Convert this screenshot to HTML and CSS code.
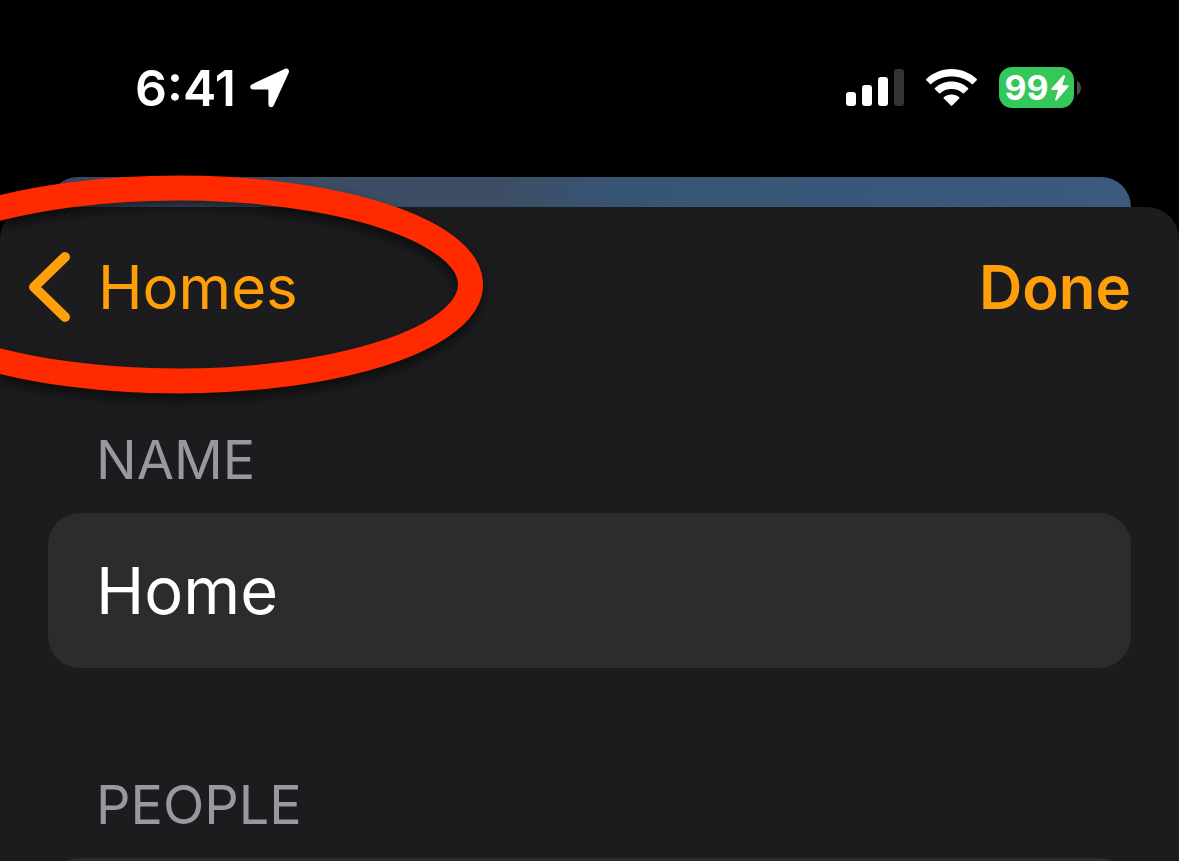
FILE: index.html
```html
<!DOCTYPE html>
<html lang="en">
<head>
<meta charset="utf-8">
<meta name="viewport" content="width=device-width, initial-scale=1">
<title>Home</title>
<link rel="stylesheet" href="styles.css">
</head>
<body>
<div class="screen">
  <header class="status">
    <div class="status-left">
      <span class="time">6:41</span>
      <svg class="location" width="40" height="40" viewBox="0 0 40 40" aria-hidden="true"><path d="M34.600.900 2.200 16.200C-.900 17.700-.200 21.500 3.200 21.500H17.700Q18.400 21.500 18.400 22.200V36.200C18.400 39.600 22.400 40.200 23.800 37.200L38.600 5C40 2 37.600-.500 34.600.900Z"/></svg>
    </div>
    <div class="status-right">
      <svg width="58" height="38" viewBox="0 0 58 38" aria-hidden="true">
        <rect x="0" y="23" width="10" height="14" rx="3" fill="#fff"/>
        <rect x="16" y="16" width="10" height="21" rx="3" fill="#fff"/>
        <rect x="32" y="8" width="10" height="29" rx="3" fill="#fff"/>
        <rect x="48" y="0" width="10" height="37" rx="3" fill="#333"/>
      </svg>
      <svg width="51" height="38" viewBox="0 0 51 38" aria-hidden="true" fill="#fff">
        <path d="M25.500 0C15.700 0 6.800 3.800.300 10.100Q-.200 10.700.300 11.300L4 15Q4.600 15.500 5.200 15C10.500 10 17.600 7.500 25.500 7.500S40.500 10 45.800 15Q46.400 15.500 47 15L50.700 11.300Q51.200 10.700 50.700 10.100C44.200 3.800 35.300 0 25.500 0Z"/>
        <path d="M25.500 12.500C19 12.500 13.200 15 8.900 19.100Q8.400 19.700 8.900 20.300L13 24.300Q13.600 24.800 14.200 24.300C17.200 21.500 21 20 25.500 20S33.800 21.500 36.800 24.300Q37.400 24.800 38 24.300L42.100 20.300Q42.600 19.700 42.100 19.100C37.800 15 32 12.500 25.500 12.500Z"/>
        <path d="M25.500 25.500C22.500 25.500 20 26.500 17.800 28.300Q17.300 28.900 17.800 29.500L24.800 36.600Q25.500 37.200 26.200 36.600L33.200 29.500Q33.700 28.900 33.200 28.300C31 26.500 28.500 25.500 25.500 25.500Z"/>
      </svg>
      <div class="battery">
        <div class="battery-body">
          <span>99</span>
          <svg width="18" height="26" viewBox="0 0 18 26" aria-hidden="true"><path d="M12 .500.600 13.500Q-.200 15 1.300 15H7L4.100 24.400Q4.100 26 5.800 25.200L17.400 11.700Q18.100 10.200 16.700 10.200H11.200L14.100 1.300Q13.800-.500 12 .500Z" fill="#fff"/></svg>
        </div>
        <svg width="4" height="14" viewBox="0 0 4 14" aria-hidden="true"><path d="M0 0Q4 2 4 7T0 14Z" fill="#4a4a4c"/></svg>
      </div>
    </div>
  </header>
  <div class="backdrop"></div>
  <main class="sheet">
    <nav class="nav">
      <button class="back" type="button">
        <svg width="42" height="72" viewBox="0 0 42 72" aria-hidden="true"><path d="M37 6 6 36 37 66" fill="none" stroke="#ff9f0a" stroke-width="10" stroke-linecap="round" stroke-linejoin="round"/></svg>
        <span>Homes</span>
      </button>
      <button class="done" type="button">Done</button>
    </nav>
    <section class="group">
      <label class="label" for="home-name">NAME</label>
      <input class="card field" id="home-name" type="text" value="Home">
    </section>
    <section class="group">
      <h2 class="label">PEOPLE</h2>
      <div class="card"></div>
    </section>
  </main>
  <svg class="marker" width="520" height="260" viewBox="0 0 520 260" aria-hidden="true"><ellipse cx="178" cy="124.500" rx="292.500" ry="96.500" fill="none" stroke="#ff2a00" stroke-width="25"/></svg>
</div>
</body>
</html>
```
FILE: styles.css
```css
* {
  box-sizing: border-box;
}

body {
  margin: 0;
  background: #000;
  color: #fff;
  font-family: Inter, "Liberation Sans", sans-serif;
}

button {
  margin: 0;
  padding: 0;
  border: 0;
  background: none;
  color: #ff9f0a;
  font: inherit;
}

svg {
  display: block;
  flex: none;
}

.screen {
  position: relative;
  display: flex;
  flex-direction: column;
  height: 100vh;
  overflow: hidden;
}

.status {
  display: flex;
  flex: none;
  justify-content: space-between;
  align-items: center;
  height: 177px;
  padding: 0 98px 2px 135px;
}

.status-left {
  display: flex;
  align-items: center;
  gap: 14px;
}

.time {
  font-size: 50px;
  font-weight: 600;
  line-height: 60px;
}

.location {
  fill: #fff;
}

.status-right {
  display: flex;
  align-items: center;
  gap: 22px;
}

.battery {
  display: flex;
  align-items: center;
  gap: 3px;
}

.battery-body {
  display: flex;
  align-items: center;
  justify-content: center;
  gap: 2px;
  width: 75px;
  height: 41px;
  border-radius: 13px;
  background: #34c759;
  font-size: 34px;
  font-weight: 700;
  line-height: 41px;
}

.backdrop {
  flex: none;
  height: 30px;
  margin: 0 48px;
  border-radius: 30px 30px 0 0;
  background: linear-gradient(100deg, #3c4b66 0%, #3c4e64 42%, #385474 52%, #3b5a7e 100%);
}

.sheet {
  flex: 1;
  min-height: 0;
  overflow: hidden;
  border-radius: 32px 32px 0 0;
  background: #1c1c1e;
}

.nav {
  display: flex;
  justify-content: space-between;
  align-items: center;
  height: 160px;
  margin-bottom: 59px;
  padding: 0 48px 0 28px;
  font-size: 60px;
  line-height: 76px;
}

.back {
  display: flex;
  align-items: center;
  gap: 28px;
}

.done {
  font-weight: 600;
}

.group {
  margin: 0 48px 103px;
}

.label {
  display: block;
  margin: 0 0 19px;
  padding-left: 48px;
  color: #98989f;
  font-size: 54px;
  font-weight: 400;
  line-height: 68px;
}

.card {
  display: block;
  width: 100%;
  height: 155px;
  border: 0;
  border-radius: 32px;
  background: #2c2c2e;
}

.field {
  padding: 0 48px;
  color: #fff;
  font-family: inherit;
  font-size: 65px;
}

.marker {
  position: absolute;
  top: 160px;
  left: 0;
  filter: drop-shadow(0 6px 6px rgba(0, 0, 0, 0.6));
  pointer-events: none;
}
```
